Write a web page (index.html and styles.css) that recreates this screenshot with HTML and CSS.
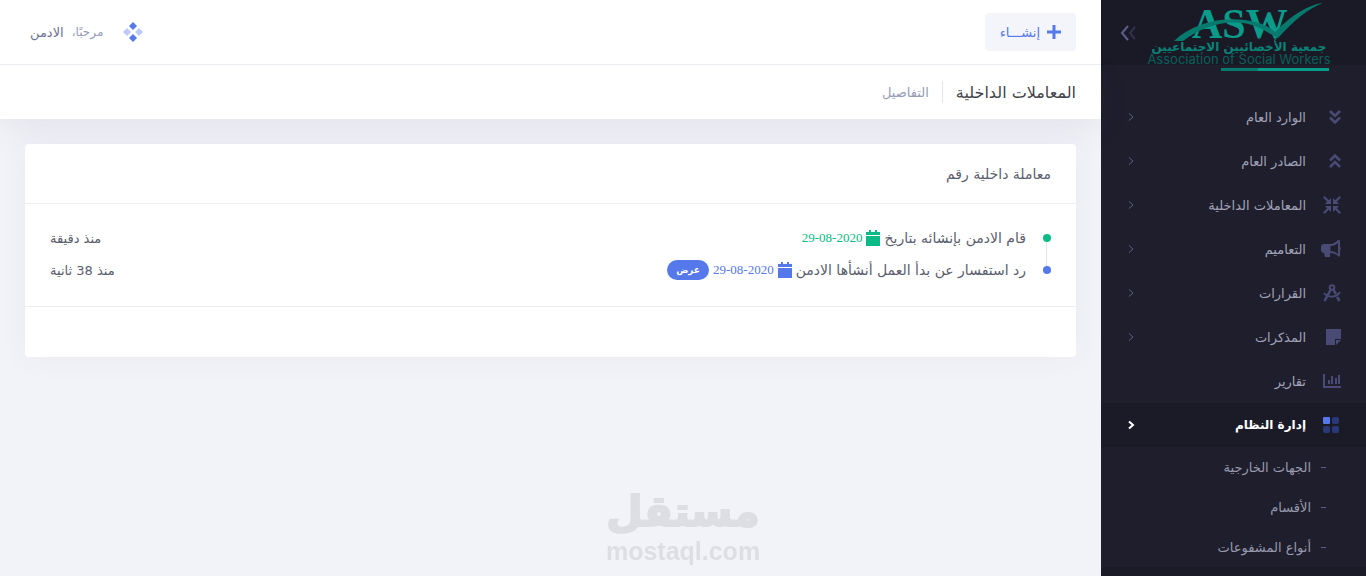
FILE: index.html
```html
<!DOCTYPE html>
<html lang="ar" dir="rtl">
<head>
  <meta charset="UTF-8">
  <meta name="viewport" content="width=device-width, initial-scale=1.0">
  <title>المعاملات الداخلية</title>
  <link rel="stylesheet" href="styles.css">
</head>
<body>
  <aside class="sidebar">
    <div class="brand">
      <svg class="logo" width="184" height="74" viewBox="0 0 184 74" direction="ltr">
        <text class="logo-asw" x="45" y="38">ASW</text>
        <path fill="#077a6e" d="M27 41 C45 24 72 17 98 20 C112 22 120 25 128 32 C140 20 158 5 176 3 C160 9 148 20 131 38 C122 34 112 25 96 23 C72 20 52 29 36 41 Z"/>
        <text class="logo-ar" x="92" y="51">جمعية الأخصائيين الاجتماعيين</text>
        <text class="logo-en" x="92" y="64">Association of Social Workers</text>
        <rect x="74" y="68" width="108" height="3" fill="#077a6e"/>
        <rect x="111" y="68" width="71" height="3" fill="#0a9c8a"/>
      </svg>
      <button class="toggle" type="button" aria-label="القائمة">
        <svg width="18" height="18" viewBox="0 0 18 18" fill="none" stroke-width="2">
          <path stroke="#5c5e8a" d="M9 2 L3 9 L9 16"/>
          <path stroke="#33304f" d="M16 3 L11 9 L16 15"/>
        </svg>
      </button>
    </div>

    <nav class="menu">
      <a class="item" href="#">
        <span class="icon"><svg width="12" height="16" viewBox="0 0 12 16" fill="none" stroke="#494b74" stroke-width="2.6"><path d="M1 2 L6 7 L11 2 M1 8.500 L6 13.500 L11 8.500"/></svg></span>
        <span class="label">الوارد العام</span>
        <svg class="arrow" width="10" height="10" viewBox="0 0 10 10"><path d="M3 1.500 L7 5 L3 8.500"/></svg>
      </a>
      <a class="item" href="#">
        <span class="icon"><svg width="12" height="16" viewBox="0 0 12 16" fill="none" stroke="#494b74" stroke-width="2.6"><path d="M1 7.500 L6 2.500 L11 7.500 M1 14 L6 9 L11 14"/></svg></span>
        <span class="label">الصادر العام</span>
        <svg class="arrow" width="10" height="10" viewBox="0 0 10 10"><path d="M3 1.500 L7 5 L3 8.500"/></svg>
      </a>
      <a class="item" href="#">
        <span class="icon"><svg width="18" height="18" viewBox="0 0 18 18" fill="#494b74"><path d="M8 8 H2 L4.200 5.800 L0 1.600 L1.600 0 L5.800 4.200 L8 2 Z M10 8 V2 L12.200 4.200 L16.400 0 L18 1.600 L13.800 5.800 L16 8 Z M8 10 V16 L5.800 13.800 L1.600 18 L0 16.400 L4.200 12.200 L2 10 Z M10 10 H16 L13.800 12.200 L18 16.400 L16.400 18 L12.200 13.800 L10 16 Z"/></svg></span>
        <span class="label">المعاملات الداخلية</span>
        <svg class="arrow" width="10" height="10" viewBox="0 0 10 10"><path d="M3 1.500 L7 5 L3 8.500"/></svg>
      </a>
      <a class="item" href="#">
        <span class="icon"><svg width="20" height="18" viewBox="0 0 20 18"><path fill="#494b74" fill-rule="evenodd" d="M18 0 C19 0 19 1 19 1 V7 C20 7 20 10 19 10 V16 C19 17 18 17 17 16 C15 14 12 13 9 13 V17 H4 L3 13 C1 13 0 12 0 10 V7 C0 5 1 4 3 4 H9 C12 4 15 2 17 0 Z M17 3 C15 5 12 6 9.500 6 V11 C12 11 15 12 17 14 Z"/></svg></span>
        <span class="label">التعاميم</span>
        <svg class="arrow" width="10" height="10" viewBox="0 0 10 10"><path d="M3 1.500 L7 5 L3 8.500"/></svg>
      </a>
      <a class="item" href="#">
        <span class="icon"><svg width="18" height="18" viewBox="0 0 18 18" fill="none" stroke="#494b74" stroke-width="2.6"><circle cx="9" cy="3.500" r="2.300" stroke-width="2"/><path d="M7.500 6 L1.500 17 M10.500 6 L13 10 M14 13 L16.500 17"/><path stroke-width="2" d="M1 9 C5 14 13 14 17 8"/></svg></span>
        <span class="label">القرارات</span>
        <svg class="arrow" width="10" height="10" viewBox="0 0 10 10"><path d="M3 1.500 L7 5 L3 8.500"/></svg>
      </a>
      <a class="item" href="#">
        <span class="icon"><svg width="16" height="16" viewBox="0 0 16 16" fill="#494b74"><path d="M1 0 H16 V10 H10 V16 H1 Z M11 11 H16 L11 16 Z"/></svg></span>
        <span class="label">المذكرات</span>
        <svg class="arrow" width="10" height="10" viewBox="0 0 10 10"><path d="M3 1.500 L7 5 L3 8.500"/></svg>
      </a>
      <a class="item" href="#">
        <span class="icon"><svg width="18" height="14" viewBox="0 0 18 14" fill="none" stroke="#494b74" stroke-width="2"><path d="M1 0 V13 H18 M6 10 V6 M9 10 V2 M13 10 V4 M16 10 V1"/></svg></span>
        <span class="label">تقارير</span>
      </a>
      <a class="item active" href="#">
        <span class="icon"><svg width="18" height="16" viewBox="0 0 18 16" fill="#2a3878"><rect fill="#5578eb" width="7" height="7" rx="1"/><rect x="9" width="7" height="7" rx="2"/><rect y="9" width="7" height="7" rx="2"/><rect x="9" y="9" width="7" height="7" rx="2"/></svg></span>
        <span class="label">إدارة النظام</span>
        <svg class="arrow" width="10" height="10" viewBox="0 0 10 10"><path d="M3 1.500 L7 5 L3 8.500"/></svg>
      </a>
      <div class="submenu">
        <a class="subitem" href="#">الجهات الخارجية</a>
        <a class="subitem" href="#">الأقسام</a>
        <a class="subitem" href="#">أنواع المشفوعات</a>
      </div>
      <div class="menu-end"></div>
    </nav>
  </aside>

  <div class="wrapper">
    <header class="topbar">
      <button class="create" type="button">
        <svg width="14" height="14" viewBox="0 0 14 14" fill="#5578eb"><path d="M5.500 0 H8.500 V5.500 H14 V8.500 H8.500 V14 H5.500 V8.500 H0 V5.500 H5.500 Z"/></svg>
        إنشـــاء
      </button>
      <div class="user">
        <svg width="20" height="20" viewBox="0 0 20 20" fill="#5578eb"><path d="M10 0 L14 4 L10 8 L6 4 Z M10 12 L14 16 L10 20 L6 16 Z"/><path fill="#bccaf7" d="M4 6 L8 10 L4 14 L0 10 Z M16 6 L20 10 L16 14 L12 10 Z"/></svg>
        <span class="hi">مرحبًا،</span>
        <span class="name">الادمن</span>
      </div>
    </header>

    <div class="subheader">
      <h1>المعاملات الداخلية</h1>
      <span class="separator"></span>
      <span class="desc">التفاصيل</span>
    </div>

    <main class="content">
      <section class="card">
        <h2 class="card-head">معاملة داخلية رقم</h2>
        <div class="card-body">
          <div class="event green">
            <span class="dot"></span>
            <span class="text">قام الادمن بإنشائه بتاريخ</span>
            <svg class="cal" width="14" height="16" viewBox="0 0 14 16"><path d="M3 0 H5 V2 H9 V0 H11 V2 H14 V5 H0 V2 H3 Z M0 6 H14 V16 H0 Z"/></svg>
            <span class="date" dir="ltr">29-08-2020</span>
            <span class="time">منذ دقيقة</span>
          </div>
          <div class="event blue">
            <span class="dot"></span>
            <span class="text">رد استفسار عن بدأ العمل أنشأها الادمن</span>
            <svg class="cal" width="14" height="16" viewBox="0 0 14 16"><path d="M3 0 H5 V2 H9 V0 H11 V2 H14 V5 H0 V2 H3 Z M0 6 H14 V16 H0 Z"/></svg>
            <span class="date" dir="ltr">29-08-2020</span>
            <a class="badge" href="#">عرض</a>
            <span class="time">منذ 38 ثانية</span>
          </div>
        </div>
        <div class="card-foot"></div>
      </section>
    </main>
  </div>

  <div class="watermark">
    <span class="mark-ar">مستقل</span>
    <span class="mark-en">mostaql.com</span>
  </div>
</body>
</html>
```
FILE: styles.css
```css
* {
  box-sizing: border-box;
}
body {
  margin: 0;
  display: flex;
  height: 100vh;
  overflow: hidden;
  background: #f2f3f8;
  color: #595d6e;
  font-family: "DejaVu Sans", sans-serif;
  font-size: 13px;
}
a {
  color: inherit;
  text-decoration: none;
}
button {
  border: 0;
  padding: 0;
  background: none;
  font: inherit;
  cursor: pointer;
}

/* sidebar */
.sidebar {
  width: 265px;
  flex-shrink: 0;
  overflow: hidden;
  background: #1e1e2d;
}
.brand {
  display: flex;
  align-items: flex-start;
  justify-content: space-between;
  height: 65px;
  padding: 0 35px 0 18px;
  background: #1a1a27;
}
.logo {
  flex-shrink: 0;
  overflow: visible;
}
.logo-asw {
  font: bold 42px "Liberation Serif", serif;
  fill: #0a9c8a;
}
.logo-ar {
  font: bold 12px "DejaVu Sans", sans-serif;
  fill: #0a8377;
  text-anchor: middle;
}
.logo-en {
  font: 13px Inter, sans-serif;
  fill: #0b5f59;
  text-anchor: middle;
}
.toggle {
  height: 65px;
  display: flex;
  align-items: center;
}
.menu {
  padding-top: 30px;
}
.item {
  display: flex;
  align-items: center;
  height: 44px;
  padding: 0 25px;
  color: #a2a3b7;
}
.icon {
  display: flex;
  width: 35px;
}
.label {
  flex: 1;
}
.arrow {
  fill: none;
  stroke: #5c5e81;
  stroke-width: 1;
}
.active {
  background: #1b1b28;
  color: #fff;
  font-size: 12px;
  font-weight: bold;
}
.active .arrow {
  stroke: #fff;
  stroke-width: 2;
}
.subitem {
  display: flex;
  align-items: center;
  gap: 10px;
  height: 40px;
  padding: 0 40px 0 25px;
  color: #9899ac;
}
.subitem::before {
  content: "";
  width: 5px;
  height: 1px;
  background: #5c5e81;
}
.menu-end {
  height: 44px;
  background: #1b1b28;
}

/* top bars */
.wrapper {
  flex: 1;
  min-width: 0;
}
.topbar {
  display: flex;
  align-items: center;
  justify-content: space-between;
  position: relative;
  z-index: 1;
  height: 65px;
  padding: 0 25px 0 30px;
  background: #fff;
  border-bottom: 1px solid #ebedf2;
}
.create {
  display: flex;
  align-items: center;
  gap: 7px;
  height: 38px;
  padding: 0 15px;
  border-radius: 4px;
  background: #f4f5fa;
  color: #5578eb;
}
.user {
  display: flex;
  align-items: center;
}
.hi {
  margin: 0 20px 0 8px;
  color: #959cb6;
  font-size: 12px;
}
.name {
  color: #6c7293;
}
.subheader {
  display: flex;
  align-items: center;
  height: 54px;
  padding: 0 25px;
  background: #fff;
  box-shadow: 0 10px 30px rgba(82, 63, 105, 0.08);
}
h1 {
  margin: 0;
  color: #434349;
  font-size: 16px;
  font-weight: normal;
}
.separator {
  width: 1px;
  height: 22px;
  margin: 0 13px;
  background: #e2e5ec;
}
.desc {
  color: #959cb6;
}

/* card */
.content {
  padding: 25px;
}
.card {
  border-radius: 4px;
  background: #fff;
  box-shadow: 0 0 30px rgba(82, 63, 105, 0.05);
}
.card-head {
  display: flex;
  align-items: center;
  height: 60px;
  margin: 0;
  padding: 0 25px;
  border-bottom: 1px solid #ebedf2;
  font-size: 14px;
  font-weight: normal;
}
.card-body {
  padding: 18px 25px 20px;
}
.event {
  display: flex;
  align-items: center;
  gap: 4px;
  height: 32px;
  position: relative;
}
.dot {
  width: 8px;
  height: 8px;
  margin-left: 13px;
  border-radius: 50%;
  background: currentColor;
}
.green {
  color: #0abb87;
}
.blue {
  color: #5578eb;
}
.green::after {
  content: "";
  position: absolute;
  top: 20px;
  right: 4px;
  width: 1px;
  height: 24px;
  background: #e2e5ec;
}
.text {
  color: #595d6e;
  font-size: 14px;
}
.cal {
  fill: currentColor;
}
.date {
  font: 13px "Liberation Serif", serif;
}
.badge {
  height: 20px;
  padding: 0 9px;
  border-radius: 10px;
  background: #5578eb;
  color: #fff;
  font-size: 9px;
  font-weight: bold;
  line-height: 20px;
}
.time {
  margin-right: auto;
  color: #595d6e;
}
.card-foot {
  height: 51px;
  border-top: 1px solid #ebedf2;
}

/* watermark */
.watermark {
  position: fixed;
  right: 0;
  bottom: 10px;
  left: 0;
  display: flex;
  flex-direction: column;
  align-items: center;
  color: #dddee3;
  font-weight: bold;
  pointer-events: none;
}
.mark-ar {
  font-size: 42px;
  line-height: 50px;
  -webkit-text-stroke: 2px #dddee3;
}
.mark-en {
  font: bold 25px "Liberation Sans", sans-serif;
}
```
